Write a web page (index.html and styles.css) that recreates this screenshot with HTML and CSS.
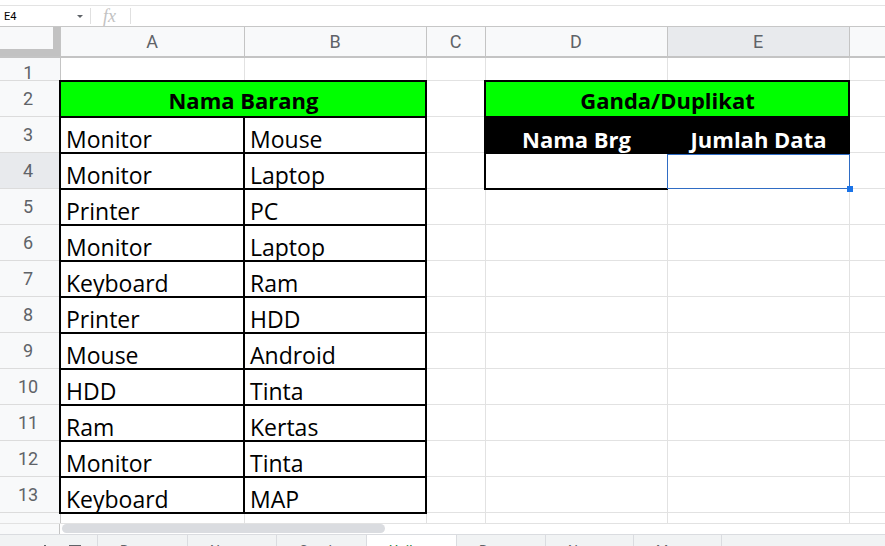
FILE: index.html
```html
<!DOCTYPE html>
<html>
<head>
<meta charset="utf-8">
<title>Sheet</title>
<link rel="stylesheet" href="styles.css">
</head>
<body>
<div class="app">
  <div class="topgap"></div>
  <div class="fbar">
    <div class="namebox"><span class="ref">E4</span><span class="caret"></span></div>
    <div class="sep"></div>
    <div class="fx">fx</div>
    <div class="sep sep2"></div>
  </div>
  <div class="viewport">
    <table class="grid">
      <colgroup>
        <col class="c-rh"><col class="c-a"><col class="c-b"><col class="c-c"><col class="c-d"><col class="c-e"><col class="c-f">
      </colgroup>
      <thead>
        <tr class="hdr"><th class="corner"><div class="freeze"></div></th><th>A</th><th>B</th><th>C</th><th>D</th><th class="hsel">E</th><th></th></tr>
      </thead>
      <tbody>
        <tr class="r1"><th class="rh"><div class="clip">1</div></th><td></td><td></td><td></td><td></td><td></td><td></td></tr>
        <tr><th class="rh">2</th><td class="b green" colspan="2">Nama Barang</td><td></td><td class="b green" colspan="2">Ganda/Duplikat</td><td></td></tr>
        <tr><th class="rh">3</th><td class="b">Monitor</td><td class="b">Mouse</td><td></td><td class="b dark">Nama Brg</td><td class="b dark">Jumlah Data</td><td></td></tr>
        <tr><th class="rh rsel">4</th><td class="b">Monitor</td><td class="b">Laptop</td><td></td><td class="lb"></td><td class="cur"><div class="selbox"><div class="handle"></div></div></td><td></td></tr>
        <tr><th class="rh">5</th><td class="b">Printer</td><td class="b">PC</td><td></td><td></td><td></td><td></td></tr>
        <tr><th class="rh">6</th><td class="b">Monitor</td><td class="b">Laptop</td><td></td><td></td><td></td><td></td></tr>
        <tr><th class="rh">7</th><td class="b">Keyboard</td><td class="b">Ram</td><td></td><td></td><td></td><td></td></tr>
        <tr><th class="rh">8</th><td class="b">Printer</td><td class="b">HDD</td><td></td><td></td><td></td><td></td></tr>
        <tr><th class="rh">9</th><td class="b">Mouse</td><td class="b">Android</td><td></td><td></td><td></td><td></td></tr>
        <tr><th class="rh">10</th><td class="b">HDD</td><td class="b">Tinta</td><td></td><td></td><td></td><td></td></tr>
        <tr><th class="rh">11</th><td class="b">Ram</td><td class="b">Kertas</td><td></td><td></td><td></td><td></td></tr>
        <tr><th class="rh">12</th><td class="b">Monitor</td><td class="b">Tinta</td><td></td><td></td><td></td><td></td></tr>
        <tr><th class="rh">13</th><td class="b">Keyboard</td><td class="b">MAP</td><td></td><td></td><td></td><td></td></tr>
        <tr><th class="rh">14</th><td></td><td></td><td></td><td></td><td></td><td></td></tr>
      </tbody>
    </table>
  </div>
  <div class="hscroll">
    <div class="hs-rh"></div>
    <div class="hs-track"><div class="thumb"></div></div>
  </div>
  <div class="tabs">
    <div class="tab-tools">
      <svg class="ico-plus" width="14" height="14" viewBox="0 0 14 14"><path d="M7 1v12M1 7h12" stroke="#5f6368" stroke-width="2"/></svg>
      <svg class="ico-menu" width="12" height="12" viewBox="0 0 12 12"><path d="M0 1h12M0 6h12M0 11h12" stroke="#5f6368" stroke-width="2"/></svg>
    </div>
    <div class="tab w90">Rumus</div>
    <div class="tab w89">Nama</div>
    <div class="tab w90">Ganda</div>
    <div class="tab w90 active">Unik</div>
    <div class="tab w89">Rumus</div>
    <div class="tab w88">Nama</div>
    <div class="tab w88">Menu</div>
    <div class="tab-fill"></div>
  </div>
</div>
</body>
</html>
```
FILE: styles.css
```css
* { box-sizing: border-box; }
html, body { margin: 0; padding: 0; }
body {
  width: 885px;
  height: 546px;
  overflow: hidden;
  background: #fff;
  font-family: Roboto, "Liberation Sans", Arial, sans-serif;
}
.app {
  width: 885px;
  height: 546px;
  display: flex;
  flex-direction: column;
  overflow: hidden;
}
.topgap { height: 5px; flex: none; }
.fbar {
  height: 22px;
  flex: none;
  border-top: 1px solid #e3e3e3;
  border-bottom: 1px solid #c7c7c7;
  display: flex;
  align-items: center;
}
.namebox {
  width: 90px;
  height: 100%;
  display: flex;
  align-items: center;
  padding-left: 4px;
}
.ref { font-size: 11px; color: #000; }
.caret {
  margin-left: auto;
  margin-right: 7px;
  width: 0;
  height: 0;
  border-left: 3px solid transparent;
  border-right: 3px solid transparent;
  border-top: 3px solid #5f6368;
}
.sep { width: 1px; height: 16px; background: #e0e0e0; flex: none; }
.fx {
  margin-left: 12px;
  width: 16px;
  font-family: "Liberation Serif", serif;
  font-style: italic;
  font-size: 18px;
  line-height: 18px;
  color: #c2c2c2;
}
.sep2 { margin-left: 11px; }

.viewport { height: 496px; flex: none; overflow: hidden; }
.grid {
  border-collapse: collapse;
  table-layout: fixed;
  width: 909px;
}
.c-rh { width: 60px; }
.c-a { width: 184px; }
.c-b { width: 182px; }
.c-c { width: 59px; }
.c-d { width: 182px; }
.c-e { width: 182px; }
.c-f { width: 60px; }

.hdr th {
  height: 29px;
  padding: 0;
  background: #f8f9fa;
  color: #5f6368;
  font-weight: normal;
  font-size: 18px;
  text-align: center;
  vertical-align: middle;
  border-left: 1px solid #c4c4c4;
  border-right: 1px solid #c4c4c4;
  border-bottom: 2px solid #c4c4c4;
}
.hdr th.hsel { background: #e8eaed; }
.hdr th.corner { border-left: none; }
.freeze {
  height: 29px;
  border-right: 7px solid #c2c2c2;
  border-bottom: 7px solid #c2c2c2;
  background: #f8f9fa;
}

td, th.rh { height: 36px; }
.r1 td, .r1 th { height: 22px; }

th.rh {
  padding: 0 3px 0 0;
  background: #f8f9fa;
  color: #5f6368;
  font-weight: normal;
  font-size: 18px;
  text-align: center;
  vertical-align: middle;
  border-bottom: 1px solid #dcdcdc;
  border-right: 1px solid #c4c4c4;
}
th.rsel { background: #e8eaed; }
.clip {
  height: 22px;
  padding-top: 5px;
  line-height: 20px;
}

td {
  border: 1px solid #e2e2e2;
  padding: 0 4px 1px 5px;
  vertical-align: bottom;
  font-family: "Open Sans", "Noto Sans", sans-serif;
  font-size: 23px;
  line-height: 24px;
  color: #000;
  white-space: nowrap;
}
td.b { border: 2px solid #000; }
td.green {
  background: #00ff00;
  font-weight: bold;
  font-size: 22px;
  text-align: center;
  padding-bottom: 4px;
}
td.dark {
  background: #000;
  color: #fff;
  font-weight: bold;
  font-size: 22px;
  text-align: center;
}
td.lb {
  border-left: 2px solid #000;
  border-bottom: 2px solid #000;
}
td.cur { position: relative; }
.selbox {
  position: absolute;
  top: 0;
  left: -1px;
  right: -1px;
  bottom: -1px;
  border: 1px solid #2f6cc4;
}
.handle {
  position: absolute;
  right: -4px;
  bottom: -4px;
  width: 6px;
  height: 6px;
  background: #1a73e8;
}

.hscroll {
  height: 12px;
  flex: none;
  display: flex;
  border-top: 1px solid #e2e2e2;
  border-bottom: 1px solid #dadce0;
}
.hs-rh {
  width: 60px;
  background: #f8f9fa;
  border-right: 1px solid #c4c4c4;
}
.hs-track { flex: 1; padding: 0 0 0 2px; }
.thumb {
  width: 323px;
  height: 9px;
  border-radius: 5px;
  background: #dadce0;
}

.tabs {
  height: 24px;
  flex: none;
  display: flex;
  background: #f1f3f4;
}
.tab-tools {
  width: 98px;
  flex: none;
  position: relative;
  border-right: 1px solid #dadce0;
}
.ico-plus { position: absolute; left: 38px; top: 9px; }
.ico-menu { position: absolute; left: 69px; top: 10px; }
.tab {
  flex: none;
  height: 24px;
  padding: 6px 0 0 22px;
  font-size: 14px;
  line-height: 20px;
  color: #5f6368;
  border-right: 1px solid #dadce0;
  background: #f1f3f4;
  overflow: hidden;
}
.tab.active { background: #fff; color: #188038; }
.w90 { width: 90px; }
.w89 { width: 89px; }
.w88 { width: 88px; }
.tab-fill { flex: 1; background: #f1f3f4; }
```
